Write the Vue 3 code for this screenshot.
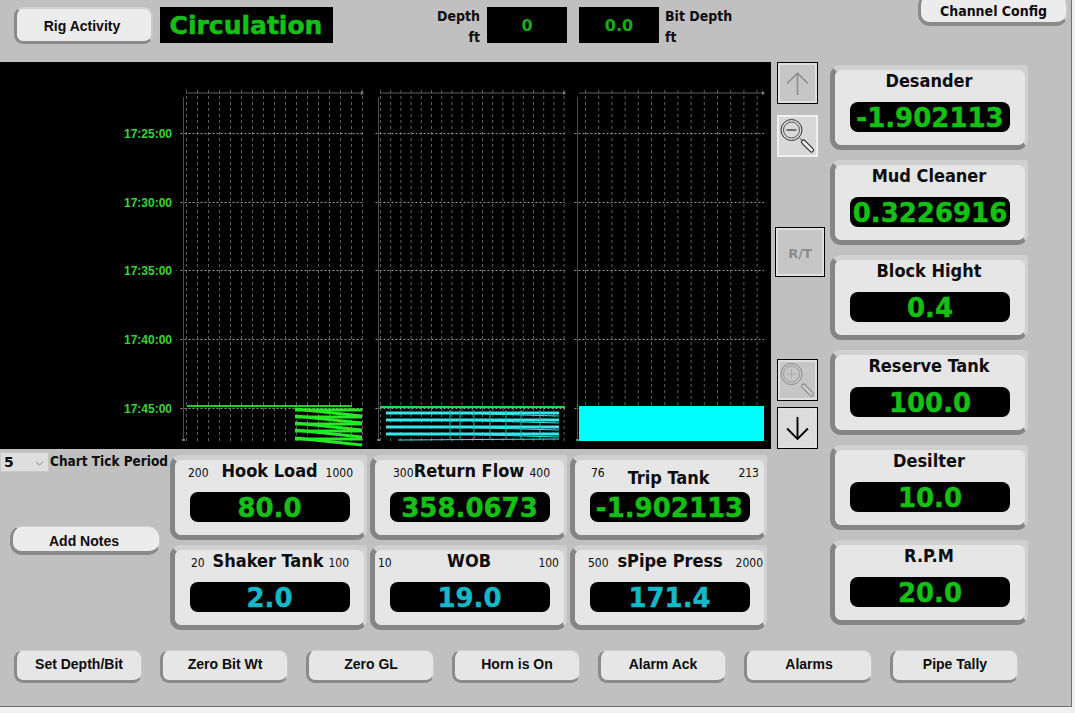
<template>
  <div class="panel">
    <div class="top">
      <button class="btn rig">Rig Activity</button>
      <div class="activity">Circulation</div>
      <div class="depth-label right">
        <span>Depth</span>
        <span>ft</span>
      </div>
      <div class="depth-box">0</div>
      <div class="depth-box second">0.0</div>
      <div class="depth-label">
        <span>Bit Depth</span>
        <span>ft</span>
      </div>
      <button class="btn config">Channel Config</button>
    </div>

    <div class="middle">
      <div class="left">
        <svg class="chart" viewBox="0 62 771 387" width="771" height="387">
          <rect x="0" y="62" width="771" height="387" fill="#000" />
          <g v-for="p in plots" :key="p.x0">
            <line :x1="p.x0" y1="93" :x2="p.x1" y2="93" stroke="#5e5e5e" />
            <path :d="`M${p.x1 - 1} 91l3 2-3 2z`" fill="#8a8a8a" />
            <line :x1="p.axis" y1="97" :x2="p.axis" y2="440" stroke="#4c4c4c" />
            <rect :x="p.axis - 1.5" y="439" width="3" height="2" fill="#777" />
            <line
              v-for="x in p.verticals"
              :key="x"
              :x1="x"
              y1="90"
              :x2="x"
              y2="441"
              stroke="#5e5e5e"
              stroke-dasharray="3 3"
            />
            <line
              v-for="y in gridY"
              :key="y"
              :x1="p.axis - 3"
              :y1="y"
              :x2="p.x1 + 1"
              :y2="y"
              stroke="#989898"
              stroke-dasharray="2 2"
            />
          </g>
          <text
            v-for="(t, i) in times"
            :key="t"
            class="time"
            x="172"
            :y="gridY[i] + 4"
            text-anchor="end"
          >{{ t }}</text>

          <line x1="187" y1="406" x2="352" y2="406" stroke="#22cc22" stroke-width="2" />
          <g v-for="y in greenRows" :key="y" stroke="#26e826" stroke-width="3">
            <line x1="295" :y1="y" x2="362" :y2="y" />
            <line x1="295" :y1="y - 1" x2="362" :y2="y + 6" />
          </g>

          <line x1="380" y1="407" x2="565" y2="407" stroke="#22dd44" stroke-width="2" />
          <g v-for="y in cyanRows" :key="y" stroke="#33e8e8">
            <line x1="386" :y1="y" x2="559" :y2="y" stroke-width="3" />
            <line x1="450" :y1="y" x2="559" :y2="y + 3" stroke-width="1" />
          </g>
          <line x1="398" y1="440" x2="559" y2="439" stroke="#33eeee" />
          <line v-for="x in cyanTicks" :key="x" :x1="x" y1="410" :x2="x" y2="440" stroke="#1fb5b5" />

          <rect x="579" y="406" width="185" height="35" fill="#00ffff" />
        </svg>

        <div class="under">
          <div class="under-left">
            <div class="period">
              <div class="select-wrap">
                <select class="period-select">
                  <option>5</option>
                </select>
                <svg class="chevron" viewBox="0 0 10 6" width="9" height="5">
                  <path d="M1 1l4 4 4-4" fill="none" stroke="#777" />
                </svg>
              </div>
              <span class="period-label">Chart Tick Period</span>
            </div>
            <button class="btn notes">Add Notes</button>
          </div>

          <div class="under-grid">
            <div v-for="g in lowerGauges" :key="g.name" class="gauge" :class="g.cls">
              <div class="inner">
                <div class="head">
                  <span class="limit">{{ g.min }}</span>
                  <span class="name">{{ g.name }}</span>
                  <span class="limit">{{ g.max }}</span>
                </div>
                <div class="display" :class="{ cyan: g.cyan }">{{ g.value }}</div>
              </div>
            </div>
          </div>
        </div>
      </div>

      <div class="tools">
        <div class="tool dark t-up">
          <svg viewBox="0 0 24 24" width="25" height="27">
            <path d="M12 23V2M2 12L12 2l10 10" fill="none" stroke="#8e8e8e" stroke-width="1.6" />
          </svg>
        </div>
        <div class="tool light t-out">
          <svg viewBox="2.5 3 36 36" width="36" height="36">
            <circle cx="14" cy="15" r="10.5" fill="none" stroke="#333" stroke-width="1" />
            <circle cx="14" cy="15" r="8" fill="none" stroke="#555" stroke-width="1" />
            <path d="M9 15h10" stroke="#555" stroke-width="1.6" />
            <path d="M22 23l3 3" stroke="#444" />
            <path d="M26 27l8 8" stroke="#222" stroke-width="5" stroke-linecap="round" />
            <path d="M26 27l8 8" stroke="#eee" stroke-width="3" stroke-linecap="round" />
          </svg>
        </div>
        <div class="tool dark rt">R/T</div>
        <div class="tool dark t-in">
          <svg viewBox="2.5 3 36 36" width="36" height="36">
            <circle cx="14" cy="15" r="10.5" fill="none" stroke="#8a8a8a" stroke-width="1" />
            <circle cx="14" cy="15" r="8" fill="none" stroke="#999" stroke-width="1" />
            <path d="M9 15h10M14 10v10" stroke="#aaa" />
            <path d="M26 27l8 8" stroke="#888" stroke-width="5" stroke-linecap="round" />
            <path d="M26 27l8 8" stroke="#ccc" stroke-width="3" stroke-linecap="round" />
          </svg>
        </div>
        <div class="tool dark t-down">
          <svg viewBox="0 0 24 24" width="25" height="27">
            <path d="M12 1v21M2 12l10 10 10-10" fill="none" stroke="#000" stroke-width="1.8" />
          </svg>
        </div>
      </div>

      <div class="side">
        <div v-for="g in sideGauges" :key="g.name" class="gauge">
          <div class="inner">
            <div class="head center">
              <span class="name">{{ g.name }}</span>
            </div>
            <div class="display">{{ g.value }}</div>
          </div>
        </div>
      </div>
    </div>

    <div class="actions">
      <button v-for="a in actions" :key="a" class="btn action">{{ a }}</button>
    </div>
  </div>
</template>

<script setup>
const range = (start, step, count) =>
  Array.from({ length: count }, (_, i) => start + step * i);

const gridY = [133.5, 202.5, 270.5, 339.5, 408.5];
const times = ["17:25:00", "17:30:00", "17:35:00", "17:40:00", "17:45:00"];

const plots = [
  { axis: 183.5, x0: 186, x1: 362, verticals: range(186.5, 11, 17) },
  { axis: 378.5, x0: 380, x1: 564, verticals: range(380.5, 10.2, 19) },
  { axis: 577.5, x0: 579, x1: 763, verticals: range(585.5, 13.2, 14) },
];

const greenRows = [410, 417, 424, 431, 439];
const cyanRows = [413, 420, 427, 434];
const cyanTicks = [450, 460, 474, 490, 506, 521, 540];

const lowerGauges = [
  { name: "Hook Load", min: 200, max: 1000, value: "80.0", cls: "hook" },
  { name: "Return Flow", min: 300, max: 400, value: "358.0673", cls: "flow" },
  { name: "Trip Tank", min: 76, max: 213, value: "-1.902113", cls: "trip" },
  { name: "Shaker Tank", min: 20, max: 100, value: "2.0", cyan: true, cls: "shaker" },
  { name: "WOB", min: 10, max: 100, value: "19.0", cyan: true, cls: "wob" },
  { name: "sPipe Press", min: 500, max: 2000, value: "171.4", cyan: true, cls: "spipe" },
];

const sideGauges = [
  { name: "Desander", value: "-1.902113" },
  { name: "Mud Cleaner", value: "0.3226916" },
  { name: "Block Hight", value: "0.4" },
  { name: "Reserve Tank", value: "100.0" },
  { name: "Desilter", value: "10.0" },
  { name: "R.P.M", value: "20.0" },
];

const actions = [
  "Set Depth/Bit",
  "Zero Bit Wt",
  "Zero GL",
  "Horn is On",
  "Alarm Ack",
  "Alarms",
  "Pipe Tally",
];
</script>

<style>
html,
body {
  margin: 0;
  background: #f0f0f0;
  overflow: hidden;
}
</style>

<style scoped>
.panel {
  width: 1071px;
  height: 706px;
  background: #c0c0c0;
  border-right: 1px solid #6e6e6e;
  border-bottom: 1px solid #6e6e6e;
  overflow: hidden;
  font-family: "DejaVu Sans Condensed", "DejaVu Sans", sans-serif;
  color: #0c0c0c;
}

.top {
  display: flex;
  align-items: flex-start;
  height: 62px;
  box-sizing: border-box;
  padding: 7px 0 0 14px;
}

.btn {
  display: block;
  box-sizing: border-box;
  padding: 0;
  background: #e6e6e6;
  border-style: solid;
  border-color: #cfcfcf #c9c9c9 #8a8a8a #8a8a8a;
  border-width: 2px 2px 3px 3px;
  border-radius: 9px;
  font-family: "Liberation Sans", Arial, sans-serif;
  font-weight: 700;
  font-size: 14px;
  color: #0c0c0c;
}

.rig {
  width: 139px;
  height: 37px;
  padding: 1px 4px 0 0;
  background: #ececec;
}

.activity {
  width: 173px;
  height: 36px;
  margin-left: 7px;
  padding-right: 1px;
  box-sizing: border-box;
  background: #000;
  color: #14c014;
  font-family: "DejaVu Sans", sans-serif;
  font-weight: 700;
  font-size: 25px;
  line-height: 37px;
  text-align: center;
  -webkit-text-stroke: 0.5px #14c014;
}

.depth-label {
  display: flex;
  flex-direction: column;
  gap: 3px;
  margin-left: 6px;
  font-weight: 700;
  font-size: 14px;
  line-height: 18px;
}

.depth-label.right {
  width: 100px;
  margin-left: 47px;
  margin-right: 7px;
  text-align: right;
}

.depth-box {
  width: 80px;
  height: 36px;
  background: #000;
  color: #14b014;
  font-family: "DejaVu Sans", sans-serif;
  font-weight: 700;
  font-size: 16px;
  line-height: 37px;
  text-align: center;
}

.depth-box.second {
  margin-left: 12px;
}

.config {
  width: 150px;
  height: 32px;
  margin: -13px 3px 0 auto;
  border-width: 0 2px 4px 3px;
  border-radius: 12px;
  background: #ececec;
  font-family: "DejaVu Sans Condensed", "DejaVu Sans", sans-serif;
  padding-top: 6px;
}

.middle {
  display: flex;
  align-items: flex-start;
}

.left {
  width: 771px;
  flex: none;
}

.chart {
  display: block;
}

.time {
  font-family: "Liberation Sans", Arial, sans-serif;
  font-weight: 700;
  font-size: 12px;
  fill: #33d633;
}

.under {
  display: flex;
}

.under-left {
  width: 170px;
  flex: none;
  padding-top: 3px;
}

.period {
  display: flex;
  align-items: center;
}

.select-wrap {
  position: relative;
  width: 49px;
  height: 20px;
  margin-right: 1px;
}

.period-select {
  appearance: none;
  display: block;
  width: 100%;
  height: 100%;
  border: 1px solid #c8c8c8;
  border-radius: 0;
  padding: 0 0 0 3px;
  background: #dedede;
  font-family: "DejaVu Sans", sans-serif;
  font-weight: 700;
  font-size: 14px;
  color: #0c0c0c;
}

.chevron {
  position: absolute;
  right: 5px;
  top: 9px;
}

.period-label {
  font-weight: 700;
  font-size: 13.5px;
  white-space: nowrap;
  margin-top: -2px;
}

.notes {
  width: 150px;
  height: 29px;
  margin: 54px 0 0 10px;
  padding: 3px 4px 0 0;
  border-width: 1px 1px 4px 3px;
  border-radius: 12px;
  background: #ececec;
}

.under-grid {
  display: grid;
  grid-template-columns: repeat(3, 197px);
  grid-auto-rows: 85px;
  gap: 5px 3px;
  margin-top: 6px;
}

.gauge {
  box-sizing: border-box;
  width: 197px;
  height: 85px;
  background: #d6d3d3;
  border-style: solid;
  border-color: #d0d0d0 #d4d0d0 #858585 #858585;
  border-width: 5px 3px 5px 5px;
  border-radius: 11px 3px 11px 11px;
}

.inner {
  height: 100%;
  background: #e6e6e6;
  border-radius: 7px;
}

.head {
  display: flex;
  justify-content: space-between;
  align-items: center;
  height: 32px;
  box-sizing: border-box;
}

.head.center {
  justify-content: center;
  padding: 0 2px 12px 0;
}

.name {
  font-weight: 700;
  font-size: 18px;
  white-space: nowrap;
}

.limit {
  font-size: 12px;
  margin-top: 4px;
}

.hook .head {
  padding: 0 11px 11px 13px;
}

.hook .name {
  margin-left: 5px;
}

.flow .head {
  padding: 0 14px 11px 18px;
}

.flow .name {
  margin-right: 5px;
}

.trip .head {
  padding: 0 5px 0 16px;
}

.trip .limit {
  margin-top: 0;
  margin-bottom: 6px;
}

.trip .name {
  margin: 2px 6px 0 0;
}

.shaker .head {
  padding: 0 15px 11px 16px;
}

.shaker .name {
  margin-left: 3px;
}

.wob .head {
  padding: 0 5px 11px 3px;
}

.wob .name {
  margin-left: 8px;
}

.spipe .head {
  padding: 0 1px 11px 13px;
}

.spipe .name {
  margin-right: 4px;
}

.display {
  width: 160px;
  height: 30px;
  margin: 0 auto;
  background: #000;
  border-radius: 8px;
  color: #14c014;
  font-family: "DejaVu Sans", sans-serif;
  font-weight: 700;
  font-size: 26px;
  line-height: 33px;
  text-align: center;
  white-space: nowrap;
  -webkit-text-stroke: 0.4px currentColor;
}

.display.cyan {
  color: #14b8c8;
}

.tools {
  width: 59px;
  flex: none;
}

.tool {
  box-sizing: border-box;
  display: flex;
  align-items: center;
  justify-content: center;
  width: 41px;
  height: 42px;
  margin-left: 6px;
  background: #c6c6c6;
  border: 1px solid #e8e8e8;
}

.tool.dark {
  outline: 1px solid #000;
  outline-offset: -1px;
  box-shadow: inset 0 0 0 2px #e0e0e0;
}

.tool.light {
  background: #d8d8d8;
  border: 2px solid #f0f0f0;
}

.t-out {
  margin-top: 11px;
}

.rt {
  width: 50px;
  height: 50px;
  margin: 70px 0 0 4px;
  padding-top: 2px;
  font-family: "DejaVu Sans", sans-serif;
  font-weight: 700;
  font-size: 13px;
  color: #8c8c8c;
}

.t-in {
  margin-top: 82px;
}

.t-down {
  margin-top: 6px;
  background: #dcdcdc;
}

.side {
  display: flex;
  flex-direction: column;
  gap: 10px;
  padding-top: 3px;
}

.side .gauge {
  width: 198px;
}

.actions {
  display: flex;
  gap: 18px;
  padding: 20px 0 0 14px;
}

.action {
  width: 128px;
  height: 33px;
  padding-bottom: 4px;
  border-width: 1px 1px 3px 3px;
  border-radius: 9px;
}
</style>
